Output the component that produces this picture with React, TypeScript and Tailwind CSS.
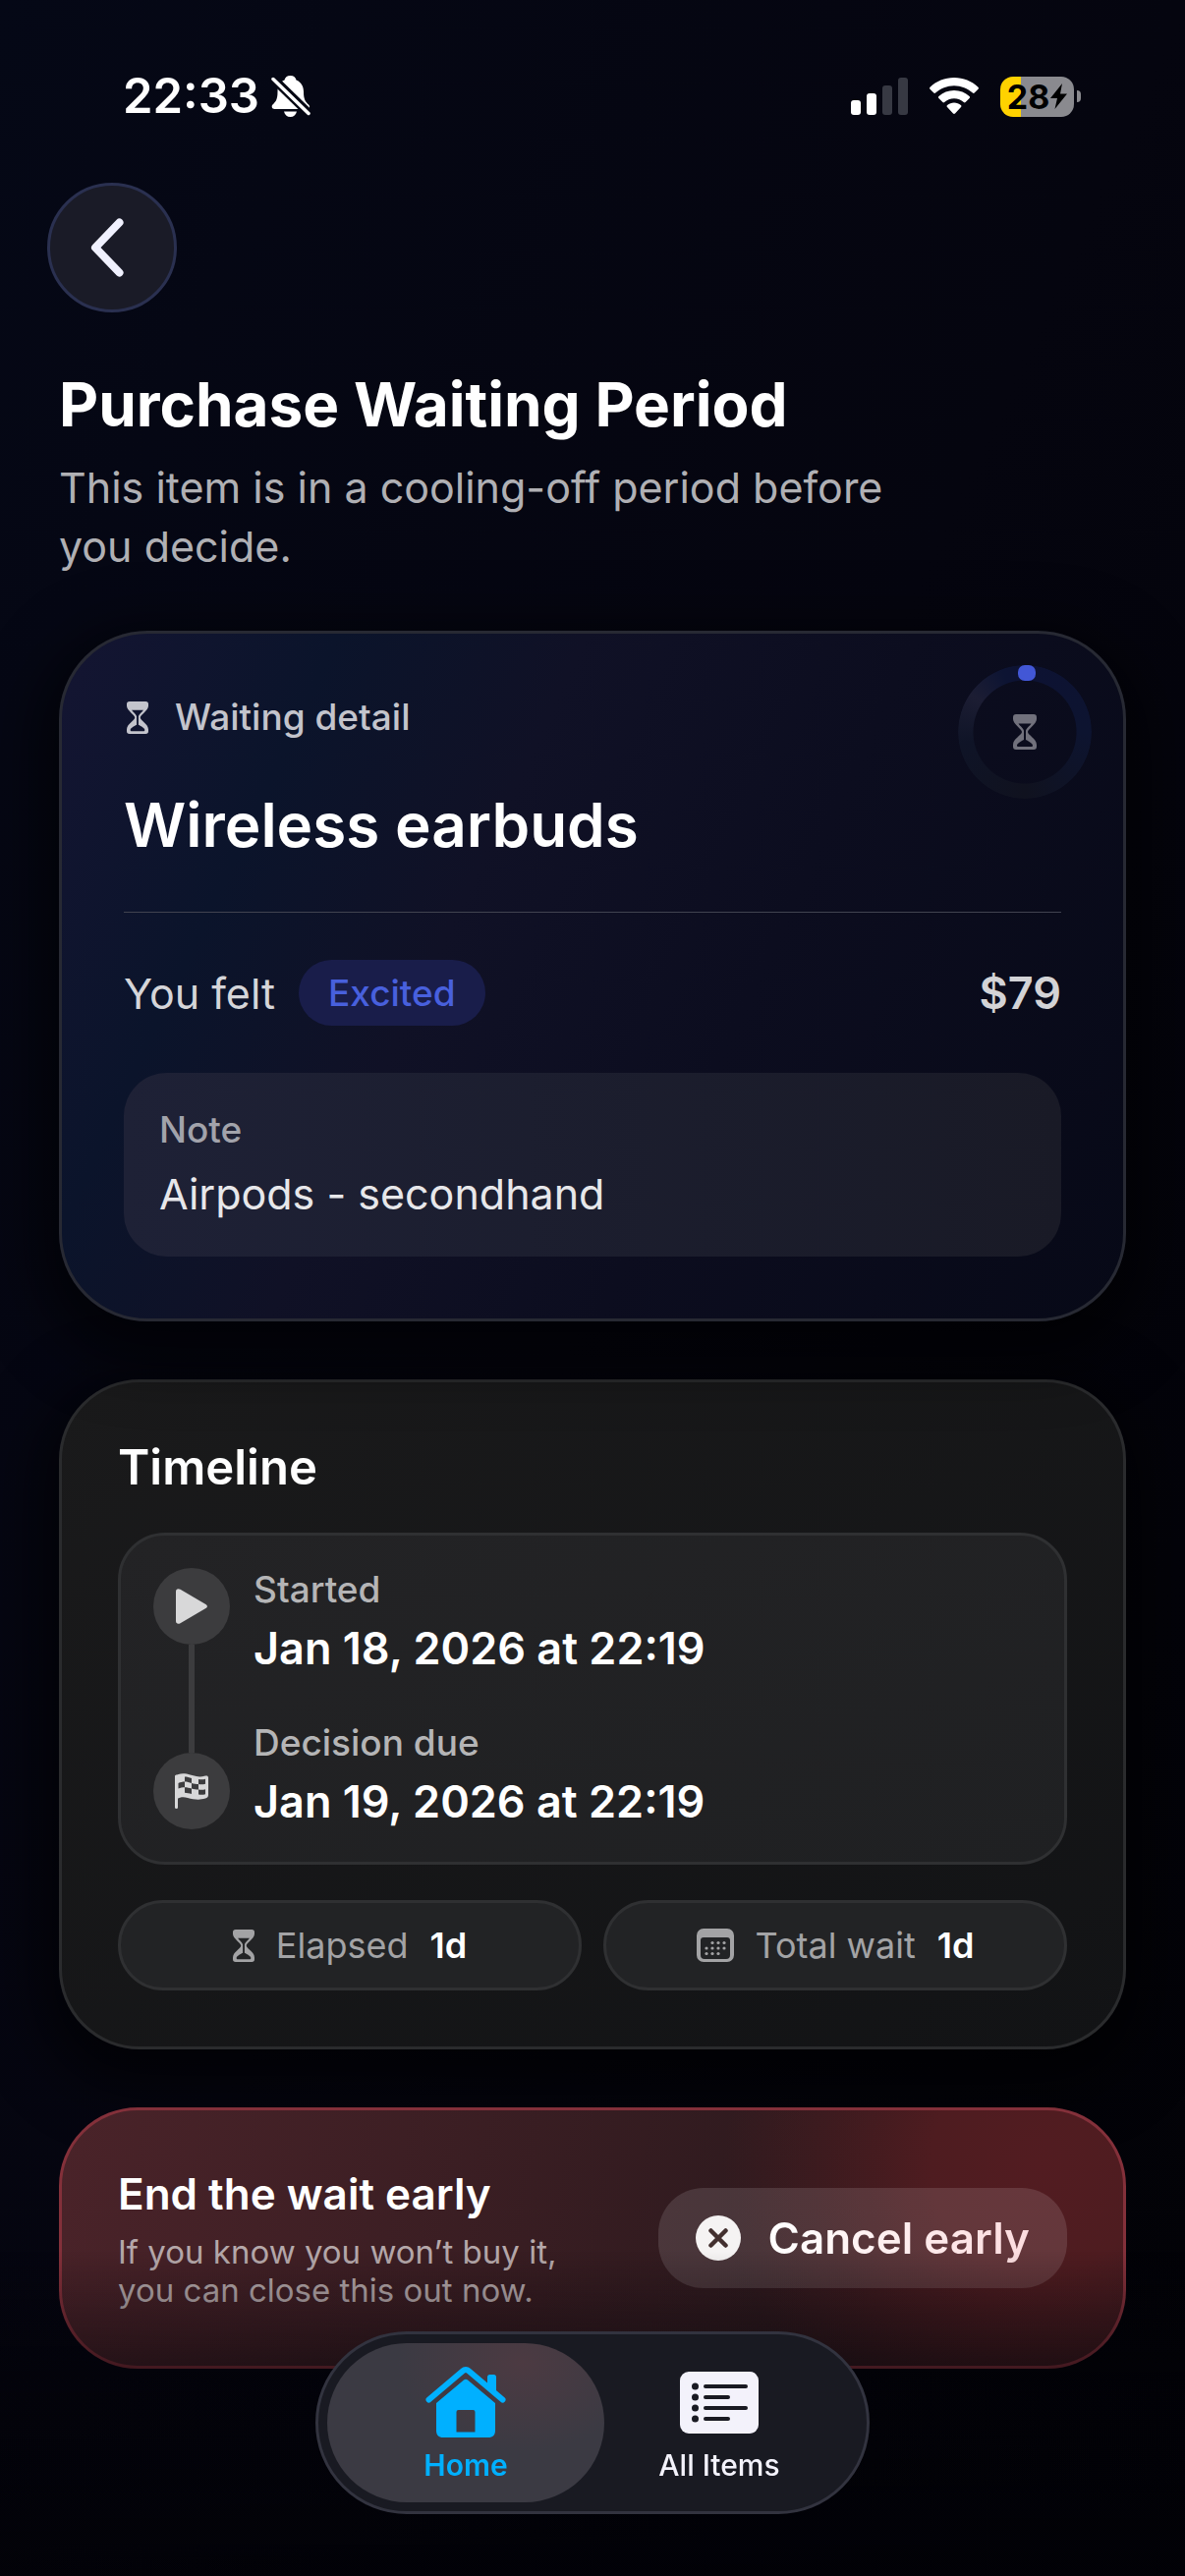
import React from 'react';

const Hourglass: React.FC<{ className?: string }> = ({ className }) => (
  <svg viewBox="0 0 24 36" className={className} fill="currentColor" aria-hidden="true">
    <path
      fillRule="evenodd"
      d="M3 0h18a3 3 0 0 1 3 3v2c0 5-9 10-9 13s9 7 9 13v2a3 3 0 0 1-3 3H3a3 3 0 0 1-3-3v-2c0-6 9-10 9-13S0 10 0 5V3a3 3 0 0 1 3-3ZM5.500 9.500c1.500 2.500 5.500 5 5.500 7.500v9c-3 1.500-7 4-7 5.500 0 1 .5 1.500 1.500 1.500h13c1 0 1.500-.5 1.500-1.500 0-1.500-4-4-7-5.500v-9c0-2.500 4-5 5.500-7.500Z"
    />
  </svg>
);

const BellSlash = () => (
  <svg viewBox="0 0 40 42" className="h-[42px] w-10" aria-hidden="true">
    <path
      fill="#fff"
      d="M19.500 0c3.500 0 5.500 2 6 4.500 5 2 7.500 6.500 7.500 12 0 8 2 10 5 13 1.500 1.500 1.500 4.500-1.500 4.500H3.500C.5 34 0 31 1.500 29.500c3-3 5-5 5-13 0-5.500 2-10 7-12 .5-2.500 2.500-4.500 6-4.500ZM13 36.500h13c-.8 3.500-3 5.500-6.500 5.500s-5.700-2-6.500-5.500Z"
    />
    <path d="M2.500 3.500 38.500 38.500" stroke="#050713" strokeWidth="9" />
    <path d="M2 3.500 38 38.500" stroke="#fff" strokeWidth="3.500" strokeLinecap="round" />
  </svg>
);

const Signal = () => (
  <svg viewBox="0 0 58 38" className="h-[38px] w-[58px]" aria-hidden="true">
    <rect x="0" y="23" width="10" height="15" rx="3" fill="#fff" />
    <rect x="16" y="16" width="10" height="22" rx="3" fill="#fff" />
    <rect x="32" y="8" width="10" height="30" rx="3" fill="#373943" />
    <rect x="48" y="0" width="10" height="38" rx="3" fill="#373943" />
  </svg>
);

const Wifi = () => (
  <svg viewBox="0 0 50 38" className="h-[38px] w-[50px]" fill="#fff" aria-hidden="true">
    <path d="M25 0c9.500 0 18 3.500 24.500 9.700.6.600.6 1.400 0 2l-3.800 3.900c-.5.500-1.200.5-1.800 0C38.800 11 32.200 8.200 25 8.200S11.200 11 6.100 15.600c-.6.500-1.300.5-1.800 0L.5 11.700c-.6-.6-.6-1.400 0-2C7 3.500 15.500 0 25 0Z" />
    <path d="M25 13c6 0 11.400 2.200 15.600 6 .6.600.6 1.400 0 2l-4 4c-.5.500-1.200.5-1.800 0-2.600-2.400-6-3.800-9.800-3.800s-7.200 1.400-9.800 3.800c-.6.500-1.300.5-1.800 0l-4-4c-.6-.6-.6-1.400 0-2 4.200-3.800 9.600-6 15.600-6Z" />
    <path d="M25 25.500c2.600 0 5 .9 6.900 2.500.7.600.7 1.400.1 2l-6 6.600c-.6.600-1.400.6-2 0L18 30c-.6-.6-.6-1.400.1-2 1.900-1.600 4.300-2.500 6.900-2.500Z" />
  </svg>
);

const Battery = () => (
  <div className="flex items-center gap-[3px]">
    <div className="flex h-[41px] w-[75px] items-center justify-center gap-px rounded-[13px] bg-linear-to-r from-[#ffd200] from-28% to-[#8a8a8f] to-28%">
      <span className="text-[34px] leading-[41px] font-bold text-black">28</span>
      <svg viewBox="0 0 17 26" className="h-[26px] w-[17px]" aria-hidden="true">
        <path d="M12 0 0 15h7L4.500 26 17 10.500h-7Z" fill="#000" />
      </svg>
    </div>
    <div className="h-3 w-1 rounded-r-full bg-[#8a8a8f]" />
  </div>
);

const Flag = () => (
  <svg viewBox="0 0 34 36" className="h-9 w-[34px]" aria-hidden="true">
    <path d="M1.500 3v31.500" stroke="#d8d8d9" strokeWidth="3" strokeLinecap="round" />
    <path
      d="M0 3C2.500.6 7-.4 12 .6c7 1.500 11 4.400 19 2 1.800-.4 3 .2 3 1.900V22c0 2-1 3-3 3.600-7 2-12 .8-18-.7-4-1-8-.7-10.500 1L0 26Z"
      fill="#d8d8d9"
    />
    <g fill="#3c3c3e">
      <path d="M10 3.500c2.500 0 4.500.6 7 1.500v5c-2.500-.9-4.500-1.500-7-1.500Z" />
      <path d="M24 6c2.500.4 5 .3 7-.3v5c-2 .6-4.500.7-7 .3Z" />
      <path d="M3.500 10c2-1 4.300-1.500 6.500-1.500v5.700c-2.200 0-4.500.4-6.500 1.300Z" />
      <path d="M17 10c2.500.7 4.500 1 7 1v5.500c-2.500 0-4.500-.3-7-1Z" />
      <path d="M10 14.200c2.500 0 4.500.6 7 1.300v5.500c-2.500-.7-4.500-1.200-7-1.300Z" />
      <path d="M24 16.500c2.500.4 5 .3 7-.3v5c-2 .6-4.500.7-7 .3Z" />
    </g>
  </svg>
);

const Calendar = () => (
  <svg viewBox="0 0 38 34" className="h-[34px] w-[38px] text-[#a3a3a5]" aria-hidden="true">
    <path
      fill="currentColor"
      fillRule="evenodd"
      d="M7 0h24a7 7 0 0 1 7 7v20a7 7 0 0 1-7 7H7a7 7 0 0 1-7-7V7a7 7 0 0 1 7-7ZM7 9a3 3 0 0 0-3 3v15a4 4 0 0 0 4 4h22a4 4 0 0 0 4-4V12a3 3 0 0 0-3-3Z"
    />
    <g fill="currentColor">
      {[16, 22, 28].map((x) => (
        <circle key={x} cx={x} cy="14.500" r="1.600" />
      ))}
      {[10, 16, 22, 28].map((x) => (
        <circle key={x} cx={x} cy="20" r="1.600" />
      ))}
      {[10, 16, 22].map((x) => (
        <circle key={x} cx={x} cy="25.500" r="1.600" />
      ))}
    </g>
  </svg>
);

const HomeIcon = () => (
  <svg viewBox="0 0 82 72" className="h-[72px] w-[82px]" aria-hidden="true">
    <path
      d="M3.500 33.500 38 4.200a4.500 4.500 0 0 1 6 0L78.500 33.500"
      fill="none"
      stroke="#00b0ff"
      strokeWidth="6"
      strokeLinecap="round"
      strokeLinejoin="round"
    />
    <path d="M63 10.500A2.500 2.500 0 0 1 65.500 8h4a2.500 2.500 0 0 1 2.500 2.500V27l-9-8Z" fill="#00b0ff" />
    <path
      fill="#00b0ff"
      fillRule="evenodd"
      d="M11 37 39 13.500c1.300-1.100 2.700-1.100 4 0L71 37v28c0 4.500-2.500 7-7 7H18c-4.500 0-7-2.500-7-7ZM33.500 44a2 2 0 0 0-2 2v20.500h19V46a2 2 0 0 0-2-2Z"
    />
  </svg>
);

const ListIcon = () => (
  <svg viewBox="0 0 80 63" className="h-[63px] w-20" aria-hidden="true">
    <rect width="80" height="63" rx="9" fill="#f3f2fb" />
    <g fill="#191a22">
      {[15, 26, 37, 48].map((y) => (
        <circle key={y} cx="15.500" cy={y} r="3.500" />
      ))}
      <rect x="24" y="13" width="45" height="4" rx="2" />
      <rect x="24" y="24" width="27" height="4" rx="2" />
      <rect x="24" y="35" width="45" height="4" rx="2" />
      <rect x="24" y="46" width="27" height="4" rx="2" />
    </g>
  </svg>
);

const ProgressRing = () => (
  <div className="absolute top-8 right-8 flex size-[136px] items-center justify-center rounded-full">
    <div className="absolute inset-0 rounded-full bg-[conic-gradient(#0d1233_0deg,#0d1430_90deg,#10121f_180deg,#0f1427_260deg,#1c1d33_305deg,#0d1433_340deg,#0d1233_360deg)] mask-[radial-gradient(closest-side,transparent_52px,black_53px)]" />
    <div className="absolute top-0 left-[61px] h-4 w-[18px] rounded-[7px] bg-[#4257d6]" />
    <Hourglass className="h-9 w-6 text-[#71717c]" />
  </div>
);

const timeline = [
  { label: 'Started', date: 'Jan 18, 2026 at 22:19' },
  { label: 'Decision due', date: 'Jan 19, 2026 at 22:19' },
];

const App: React.FC = () => {
  return (
    <div className="min-h-screen bg-linear-to-br from-[#050816] via-[#05050f] to-[#020206] pb-[210px] font-['Inter',sans-serif] text-white">
      <div className="flex h-32 items-center justify-between pt-[68px] pr-[106px] pl-[125px]">
        <div className="flex items-center gap-3">
          <span className="text-[49px] leading-[60px] font-semibold">22:33</span>
          <BellSlash />
        </div>
        <div className="flex items-center gap-[22px]">
          <Signal />
          <Wifi />
          <Battery />
        </div>
      </div>

      <header className="px-12 pt-[58px]">
        <button
          type="button"
          aria-label="Back"
          className="flex size-[132px] items-center justify-center rounded-full border-[3px] border-[#2a3050] bg-[#1a1b27] pr-[10px]"
        >
          <svg viewBox="0 0 34 60" className="h-[60px] w-[34px]" fill="none" aria-hidden="true">
            <path d="M29.500 4.500 5 30l24.500 25.500" stroke="#f0f1fe" strokeWidth="8" strokeLinecap="round" strokeLinejoin="round" />
          </svg>
        </button>
      </header>

      <main className="px-[60px] pt-[54px]">
        <h1 className="text-[62px] leading-[80px] font-bold">Purchase Waiting Period</h1>
        <p className="mt-[14px] max-w-[900px] text-[43px] leading-[60px] text-[#b0b0b4]">
          This item is in a cooling-off period before you decide.
        </p>

        <section className="relative mt-14 flex flex-col gap-12 rounded-[90px] border-[3px] border-[#272933] bg-[linear-gradient(115deg,#141532_0%,#0b142b_20%,#101126_38%,#0c0d1f_62%,#070917_100%)] p-[63px] shadow-[0_20px_60px_20px_rgba(0,0,0,0.6)]">
          <div className="flex items-center gap-[27px] pl-[3px]">
            <Hourglass className="h-[33px] w-[22px] text-[#c3c4cc]" />
            <span className="text-[37px] leading-[44px] font-medium text-[#c3c4cc]">Waiting detail</span>
          </div>
          <ProgressRing />
          <h2 className="text-[62px] leading-[80px] font-semibold">Wireless earbuds</h2>
          <hr className="border-[#414350]" />
          <div className="flex items-center">
            <span className="text-[43px] leading-[56px] text-[#d5d5d9]">You felt</span>
            <span className="ml-6 flex h-[67px] items-center rounded-full bg-[#191d4a] px-[30px] text-[37px] leading-[44px] font-medium text-[#4860dd]">
              Excited
            </span>
            <span className="ml-auto text-[45px] leading-[56px] font-semibold text-[#d3d3d6]">$79</span>
          </div>
          <div className="flex flex-col gap-[15px] rounded-[44px] bg-linear-to-r from-[#1e2136] to-[#191a26] p-9">
            <span className="text-[37px] leading-[44px] font-medium text-[#a2a3ab]">Note</span>
            <span className="text-[43px] leading-[56px] text-[#e7e7ea]">Airpods - secondhand</span>
          </div>
        </section>

        <section className="mt-[59px] flex flex-col gap-9 rounded-[82px] border-[3px] border-[#2a2b2d] bg-linear-to-br from-[#1a1a1b] to-[#121315] p-[57px] shadow-[0_20px_60px_20px_rgba(0,0,0,0.6)]">
          <h2 className="text-[49px] leading-[60px] font-semibold">Timeline</h2>
          <div className="flex gap-6 rounded-[48px] border-[3px] border-[#2f3032] bg-linear-to-br from-[#232325] to-[#1f2022] p-[33px]">
            <div className="flex flex-col items-center">
              <div className="flex size-[78px] items-center justify-center rounded-full bg-[#3c3c3e]">
                <svg viewBox="0 0 32 36" className="h-9 w-8" aria-hidden="true">
                  <path d="M0 3C0 .5 2-.5 4.500.8l25.500 15c2.600 1.500 2.600 3 0 4.500l-25.500 15C2 36.500 0 35.500 0 33Z" fill="#d8d8d9" />
                </svg>
              </div>
              <div className="h-[110px] w-[6px] bg-[#3c3c3e]" />
              <div className="flex size-[78px] items-center justify-center rounded-full bg-[#3c3c3e]">
                <Flag />
              </div>
            </div>
            <div className="flex flex-col justify-between">
              {timeline.map((item) => (
                <div key={item.label} className="flex flex-col gap-[10px]">
                  <span className="text-[37px] leading-[44px] font-medium text-[#b5b5b6]">{item.label}</span>
                  <span className="text-[45px] leading-[56px] font-semibold">{item.date}</span>
                </div>
              ))}
            </div>
          </div>
          <div className="grid grid-cols-2 gap-[22px] text-[36px] leading-[44px]">
            <div className="flex h-[92px] items-center justify-center gap-[22px] rounded-full border-[3px] border-[#2f3032] bg-[#222325]">
              <Hourglass className="h-[33px] w-[22px] text-[#a3a3a5]" />
              <span className="text-[#a3a3a5]">Elapsed</span>
              <span className="font-semibold">1d</span>
            </div>
            <div className="flex h-[92px] items-center justify-center gap-[22px] rounded-full border-[3px] border-[#2f3032] bg-[#222325]">
              <Calendar />
              <span className="text-[#a3a3a5]">Total wait</span>
              <span className="font-semibold">1d</span>
            </div>
          </div>
        </section>

        <section className="mt-[59px] flex items-center justify-between rounded-[80px] border-[3px] border-[#83303a] bg-[radial-gradient(circle_at_92%_22%,#521c21_0%,#4e1c20_110px,#4e1c2000_320px),linear-gradient(100deg,#4a2329_0%,#2b191d_75%,#2b191d_100%)] p-[57px]">
          <div className="flex flex-col gap-3">
            <h2 className="text-[44px] leading-[56px] font-semibold">End the wait early</h2>
            <p className="max-w-[480px] text-[33px] leading-[39px] text-[#b5a8aa]">
              If you know you won’t buy it, you can close this out now.
            </p>
          </div>
          <button
            type="button"
            className="flex h-[102px] items-center gap-7 rounded-[46px] bg-white/12 px-[38px] text-[44px] leading-[56px] font-semibold text-[#fbe9ea]"
          >
            <svg viewBox="0 0 46 46" className="size-[46px]" aria-hidden="true">
              <circle cx="23" cy="23" r="23" fill="#f5f3f3" />
              <path d="m15.500 15.500 15 15m0-15-15 15" stroke="#43302f" strokeWidth="4.500" strokeLinecap="round" />
            </svg>
            <span className="bg-linear-to-r from-white to-[#fcdcde] bg-clip-text text-transparent">Cancel early</span>
          </button>
        </section>
      </main>

      <div className="pointer-events-none fixed inset-x-0 bottom-0 h-[330px] bg-linear-to-b from-transparent via-[#020207]/50 via-36% to-[#020207]/80" />

      <nav className="fixed inset-x-0 bottom-[63px] flex justify-center">
        <div className="flex rounded-[94px] border-[3px] border-[#32333f] bg-[#191a22] p-[9px]">
          <a
            href="#home"
            aria-current="page"
            className="flex h-[162px] w-[282px] flex-col items-center justify-center gap-[10px] rounded-[82px] bg-[#3b3a43] bg-[radial-gradient(ellipse_at_70%_12%,#4c3a42_0%,#3b3a4300_45%)] pt-1 text-[30px] leading-[36px] font-semibold text-[#00b0ff]"
          >
            <HomeIcon />
            Home
          </a>
          <a
            href="#items"
            className="-ml-6 flex h-[162px] w-[282px] flex-col items-center justify-center gap-[10px] rounded-[82px] pt-1 text-[30px] leading-[36px] font-medium text-[#f3f2fb]"
          >
            <div className="flex h-[72px] items-center">
              <ListIcon />
            </div>
            All Items
          </a>
        </div>
      </nav>
    </div>
  );
};

export default App;
